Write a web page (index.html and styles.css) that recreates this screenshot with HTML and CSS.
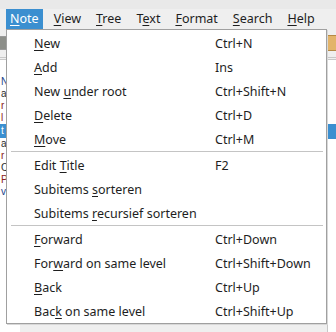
FILE: index.html
```html
<!DOCTYPE html>
<html>
<head>
    <title>Notes</title>
    <link rel="stylesheet" href="styles.css">
</head>
<body>
    <div class="window">
        <div class="titlestrip"></div>
        <div class="menubar">
            <span class="menu-title active"><u>N</u>ote</span>
            <span class="menu-title"><u>V</u>iew</span>
            <span class="menu-title"><u>T</u>ree</span>
            <span class="menu-title">T<u>e</u>xt</span>
            <span class="menu-title"><u>F</u>ormat</span>
            <span class="menu-title"><u>S</u>earch</span>
            <span class="menu-title"><u>H</u>elp</span>
        </div>
        <div class="toolbar">
            <span class="tool grey"></span>
            <span class="tool tan"></span>
        </div>
        <div class="panes">
            <div class="tree">
                <div class="node blue">N</div>
                <div class="node">a</div>
                <div class="node red">r</div>
                <div class="node red">l</div>
                <div class="node selected">t</div>
                <div class="node">a</div>
                <div class="node red">r</div>
                <div class="node">C</div>
                <div class="node red">P</div>
                <div class="node blue">v</div>
            </div>
            <div class="editor">
                <div class="editor-row selected"></div>
            </div>
        </div>
    </div>

    <div class="popup">
        <div class="item"><span class="label"><u>N</u>ew</span><span class="key">Ctrl+N</span></div>
        <div class="item"><span class="label"><u>A</u>dd</span><span class="key">Ins</span></div>
        <div class="item"><span class="label">New <u>u</u>nder root</span><span class="key">Ctrl+Shift+N</span></div>
        <div class="item"><span class="label"><u>D</u>elete</span><span class="key">Ctrl+D</span></div>
        <div class="item"><span class="label"><u>M</u>ove</span><span class="key">Ctrl+M</span></div>
        <div class="separator"></div>
        <div class="item"><span class="label">Edit <u>T</u>itle</span><span class="key">F2</span></div>
        <div class="item"><span class="label">Subitems <u>s</u>orteren</span><span class="key"></span></div>
        <div class="item"><span class="label">Subitems <u>r</u>ecursief sorteren</span><span class="key"></span></div>
        <div class="separator"></div>
        <div class="item"><span class="label"><u>F</u>orward</span><span class="key">Ctrl+Down</span></div>
        <div class="item"><span class="label">For<u>w</u>ard on same level</span><span class="key">Ctrl+Shift+Down</span></div>
        <div class="item"><span class="label"><u>B</u>ack</span><span class="key">Ctrl+Up</span></div>
        <div class="item"><span class="label">Bac<u>k</u> on same level</span><span class="key">Ctrl+Shift+Up</span></div>
    </div>
</body>
</html>
```

FILE: styles.css
```css
body {
    margin: 0;
    font-family: "Noto Sans", sans-serif;
    font-size: 12.5px;
    color: #1e1e1e;
    background-color: #efefef;
}

u {
    text-decoration: underline;
    text-underline-offset: 2px;
}

.window {
    height: 332px;
    display: flex;
    flex-direction: column;
}
.titlestrip {
    height: 9px;
    background-color: #e9e9e9;
}
.menubar {
    height: 20px;
    display: flex;
    align-items: center;
    padding-left: 6px;
    gap: 7px;
    background-color: #efefef;
}
.menu-title {
    height: 20px;
    line-height: 20px;
    padding: 0 4px;
}
.menu-title.active {
    background-color: #3b8fd0;
    color: white;
}
.menu-title.active u {
    text-decoration-color: white;
}

.toolbar {
    height: 28px;
    display: flex;
    align-items: center;
    justify-content: space-between;
    border-bottom: 3px double #c8c8c8;
}
.tool {
    height: 12px;
    width: 14px;
    border: 1px solid #9a9a9a;
    border-radius: 2px;
}
.tool.grey {
    background-color: #8d8f8a;
    margin-left: -6px;
}
.tool.tan {
    height: 14px;
    background-color: #e3b46a;
    border-color: #b58a45;
    margin-right: -6px;
}

.panes {
    flex: 1;
    display: flex;
    justify-content: space-between;
}
.tree {
    width: 20px;
    background-color: white;
    padding-top: 16px;
    font-family: "Liberation Sans", sans-serif;
    font-size: 10px;
}
.node {
    height: 12px;
    line-height: 12px;
    padding-left: 1px;
    color: #2c2c2c;
}
.node.blue {
    color: #1b3f8c;
}
.node.red {
    color: #8b2020;
}
.node.selected {
    height: 14px;
    line-height: 14px;
    background-color: #3b8fd0;
    color: white;
}
.editor {
    width: 8px;
    background-color: white;
    border-left: 1px solid #c8c8c8;
    padding-top: 64px;
}
.editor-row.selected {
    height: 15px;
    background-color: #3b8fd0;
}

.popup {
    position: absolute;
    left: 6px;
    top: 29px;
    width: 319px;
    padding: 1px 0 0;
    background-color: white;
    border: 1px solid #a0a0a0;
    box-shadow: 1px 1px 0 #d8d8d8;
}
.item {
    height: 24px;
    display: flex;
    align-items: center;
    padding-left: 27px;
}
.label {
    width: 181px;
}
.separator {
    height: 1px;
    margin: 0 3px 1px 4px;
    background-color: #c4c4c4;
}
```
